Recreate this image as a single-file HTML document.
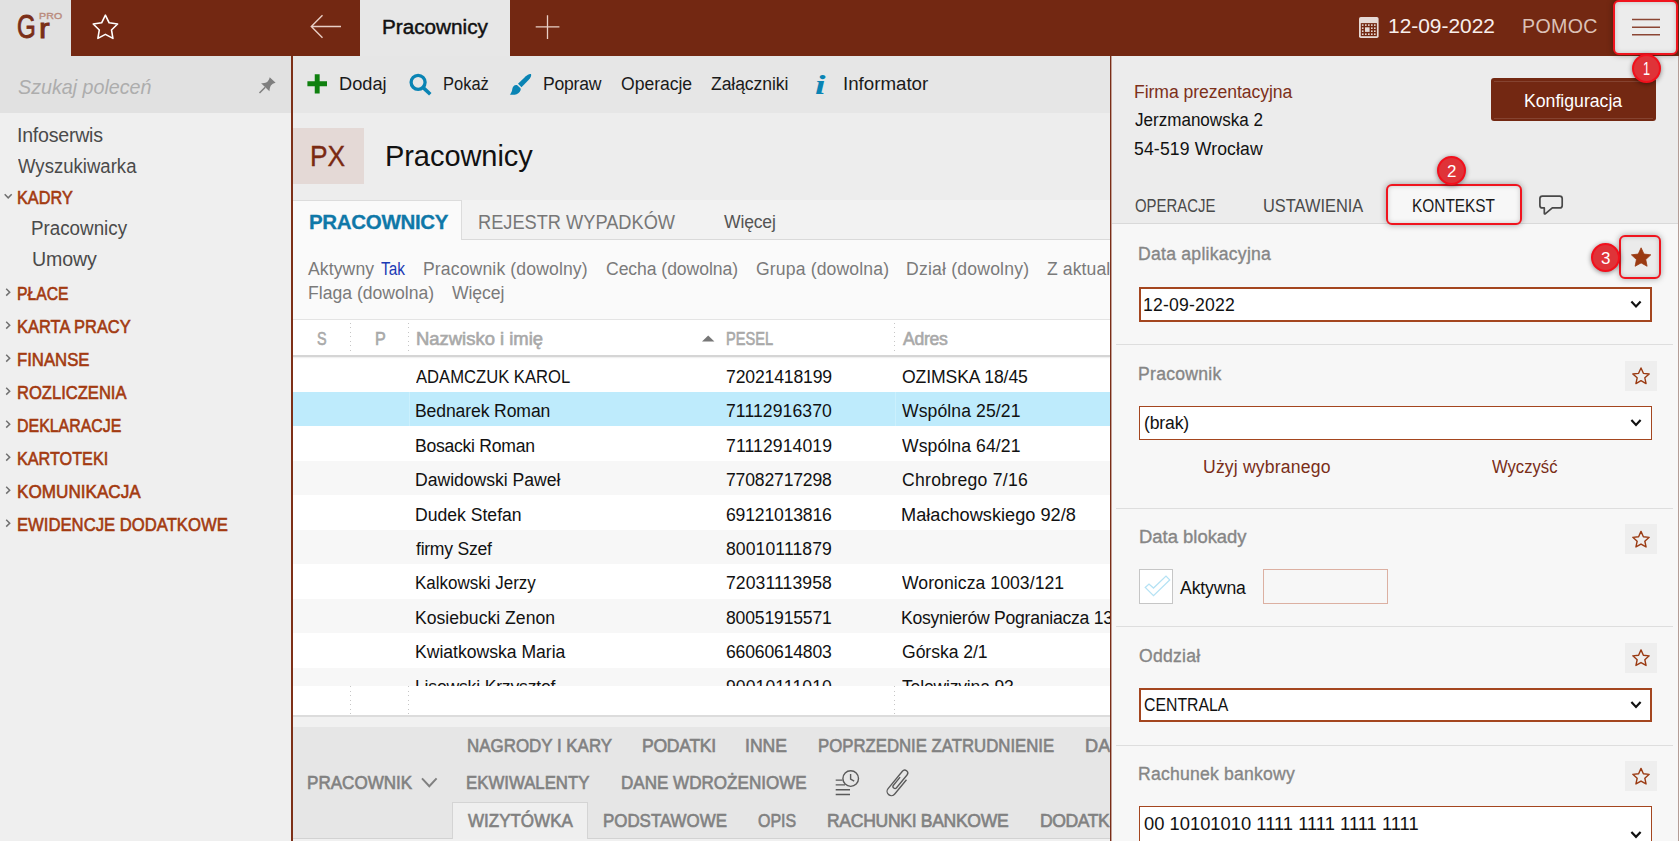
<!DOCTYPE html>
<html lang="pl"><head><meta charset="utf-8"><title>Pracownicy</title>
<style>
html,body{margin:0;padding:0}
body{width:1679px;height:841px;overflow:hidden;position:relative;background:#efefef;font-family:"Liberation Sans", sans-serif;}
.t{position:absolute;line-height:1;white-space:pre;}
.a{position:absolute;}

.inp{position:absolute;box-sizing:border-box;background:#fff;border:2px solid #a4461f;left:1139px;width:513px;height:35px;}
.sep{position:absolute;left:1116px;width:557px;height:1px;background:#dedede;}
.sbtn{position:absolute;left:1625px;width:32px;height:30px;background:#eeeeee;}
.badge{position:absolute;width:25px;height:25px;border-radius:50%;background:#df3338;border:2px solid #f2101c;box-shadow:0 1px 5px rgba(0,0,0,.45);}
.rbox{position:absolute;box-sizing:border-box;border:2.4px solid #f0141e;border-radius:6px;box-shadow:0 0 6px rgba(0,0,0,.35), inset 0 0 5px rgba(0,0,0,.18);}
.row{position:absolute;left:293px;width:817px;height:34.5px;}
.dot{position:absolute;width:1px;background:repeating-linear-gradient(to bottom,#c6c6c6 0,#c6c6c6 1px,transparent 1px,transparent 4.5px);}

</style></head><body>

<div class="a" style="left:0;top:0;width:1679px;height:56px;background:#732812"></div>
<div class="a" style="left:0;top:0;width:71px;height:56px;background:#e1e1e1"></div>
<div class="a" style="left:0;top:56px;width:291px;height:57px;background:#e1e1e1"></div>
<div class="a" style="left:360px;top:0;width:150px;height:56px;background:#e7e7e7"></div>
<div class="a" style="left:293px;top:56px;width:817px;height:57px;background:#e6e6e6"></div>
<div class="a" style="left:293px;top:113px;width:817px;height:87px;background:#ededed"></div>
<div class="a" style="left:293px;top:128px;width:71px;height:56px;background:#e4d9d6"></div>
<div class="a" style="left:293px;top:200px;width:817px;height:39px;background:#f2f2f2;border-bottom:1px solid #dadada"></div>
<div class="a" style="left:293px;top:200px;width:169px;height:40px;background:#fafafa;border-top:1px solid #dcdcdc;border-right:1px solid #dcdcdc;box-sizing:border-box"></div>
<div class="a" style="left:293px;top:240px;width:817px;height:79px;background:#fafafa"></div>
<div class="a" style="left:293px;top:319px;width:817px;height:37px;background:#fff;border-top:1px solid #e4e4e4;box-sizing:border-box"></div>
<div class="row" style="top:357.2px;background:#ffffff"></div><div class="row" style="top:391.7px;background:#beebfc"></div><div class="row" style="top:426.2px;background:#ffffff"></div><div class="row" style="top:460.7px;background:#f7f7f7"></div><div class="row" style="top:495.2px;background:#ffffff"></div><div class="row" style="top:529.7px;background:#f7f7f7"></div><div class="row" style="top:564.2px;background:#ffffff"></div><div class="row" style="top:598.7px;background:#f7f7f7"></div><div class="row" style="top:633.2px;background:#ffffff"></div><div class="row" style="top:667.7px;background:#f7f7f7"></div>
<div class="a" style="left:409px;top:392px;width:1px;height:34px;background:#cbf0fd"></div><div class="a" style="left:895px;top:392px;width:1px;height:34px;background:#cbf0fd"></div>
<div class="a" style="left:293px;top:355px;width:817px;height:1.7px;background:#d5d5d5;box-shadow:0 1px 1.5px rgba(0,0,0,.08)"></div>
<div class="dot" style="left:350px;top:323px;height:30px"></div>
<div class="dot" style="left:408px;top:323px;height:30px"></div>
<div class="dot" style="left:894px;top:323px;height:30px"></div>
<div class="a" style="left:293px;top:716px;width:817px;height:11px;background:#f1f1f1"></div>
<div class="a" style="left:293px;top:727px;width:817px;height:114px;background:#e6e6e6"></div>
<div class="a" style="left:293px;top:838px;width:817px;height:3px;background:#f0f0f0;border-top:1px solid #d2d2d2;box-sizing:border-box"></div>
<div class="a" style="left:452px;top:802px;width:136px;height:37px;background:#efefef;border:1px solid #d4d4d4;border-bottom:none;box-sizing:border-box"></div>
<div class="a" style="left:291px;top:56px;width:2px;height:785px;background:#7d3018"></div>

<div class="a" style="left:1112px;top:56px;width:567px;height:167px;background:#ececec"></div>
<div class="a" style="left:1112px;top:223px;width:567px;height:618px;background:#f7f7f7;border-top:1px solid #d9d9d9;box-sizing:border-box"></div>
<div class="a" style="left:1110px;top:56px;width:1px;height:785px;background:#7a2d17"></div><div class="a" style="left:1111px;top:56px;width:1px;height:785px;background:#c2a198"></div>
<div class="a" style="left:1491px;top:78px;width:165px;height:42.5px;background:#732812;border-radius:3px"></div>
<div class="a" style="left:1494px;top:80.6px;width:159px;height:36.4px;border-top:1px solid rgba(255,255,255,.13);border-bottom:1px solid rgba(255,255,255,.13)"></div>
<div class="a" style="left:1678px;top:56px;width:1px;height:785px;background:#b39d96"></div>
<div class="sep" style="top:344px"></div>
<div class="sep" style="top:508px"></div>
<div class="sep" style="top:626px"></div>
<div class="sep" style="top:745px"></div>
<div class="inp" style="top:287px"></div>
<div class="inp" style="top:406px;height:34px;border-width:1.2px"></div>
<div class="inp" style="top:688px;height:34px"></div>
<div class="inp" style="top:806px;height:60px;border-width:1.2px"></div>
<div class="sbtn" style="top:360.5px"></div>
<div class="sbtn" style="top:524px"></div>
<div class="sbtn" style="top:642.5px"></div>
<div class="sbtn" style="top:761px"></div>
<div class="a" style="left:1139px;top:569px;width:34px;height:35px;box-sizing:border-box;background:#fff;border:1.3px solid #c6c6c6"></div>
<div class="a" style="left:1263px;top:569px;width:125px;height:34.5px;box-sizing:border-box;background:#f7f7f7;border:1.5px solid #dcb0a2"></div>

<div class="rbox" style="left:1612.6px;top:0.4px;width:65.8px;height:55px;background:#ececec"></div>
<div class="rbox" style="left:1386px;top:184px;width:136px;height:41px;background:#f7f7f7"></div>
<div class="rbox" style="left:1619px;top:235px;width:42px;height:43.5px;background:#ebebeb"></div>
<div class="badge" style="left:1632px;top:54px"></div>
<div class="badge" style="left:1437px;top:156px"></div>
<div class="badge" style="left:1590.8px;top:243px"></div>

<div class="a" style="left:0;top:0;width:1679px;height:841px;overflow:hidden">
<span class="t" style="left:17px;top:9px;font-size:34px;-webkit-text-stroke:0.9px currentColor;color:#7a2e18;transform:scaleX(0.7114);transform-origin:0 0;">G</span>
<span class="t" style="left:39px;top:15px;font-size:27.5px;-webkit-text-stroke:0.9px currentColor;color:#7a2e18;transform:scaleX(1.1614);transform-origin:0 0;">r</span>
<span class="t" style="left:39px;top:12px;font-size:9.3px;-webkit-text-stroke:0.4px currentColor;color:#ba8a7c;letter-spacing:0.109px;transform:scaleX(1.1375);transform-origin:0 0;">PRO</span>
<span class="t" style="left:382px;top:17px;font-size:20px;-webkit-text-stroke:0.45px currentColor;color:#111;letter-spacing:0.000px;transform:scaleX(1.0357);transform-origin:0 0;">Pracownicy</span>
<span class="t" style="left:1388px;top:17px;font-size:19.6px;color:#f8efec;letter-spacing:0.000px;transform:scaleX(1.0669);transform-origin:0 0;">12-09-2022</span>
<span class="t" style="left:1522px;top:17px;font-size:19.6px;color:#dcc1b7;letter-spacing:0.362px;">POMOC</span>
<span class="t" style="left:18px;top:76px;font-size:21px;font-style:italic;color:#adadad;letter-spacing:0.000px;transform:scaleX(0.9374);transform-origin:0 0;">Szukaj poleceń</span>
<span class="t" style="left:17px;top:126px;font-size:19.6px;color:#4a4a4a;letter-spacing:-0.249px;">Infoserwis</span>
<span class="t" style="left:18px;top:157px;font-size:19.6px;color:#4a4a4a;letter-spacing:0.014px;transform:scaleX(0.9464);transform-origin:0 0;">Wyszukiwarka</span>
<span class="t" style="left:17px;top:189px;font-size:18px;-webkit-text-stroke:0.6px currentColor;color:#a33a10;letter-spacing:0.041px;transform:scaleX(0.9017);transform-origin:0 0;">KADRY</span>
<span class="t" style="left:31px;top:219px;font-size:19.6px;color:#4a4a4a;letter-spacing:0.000px;transform:scaleX(0.9586);transform-origin:0 0;">Pracownicy</span>
<span class="t" style="left:32px;top:250px;font-size:19.6px;color:#4a4a4a;letter-spacing:-0.145px;">Umowy</span>
<span class="t" style="left:17px;top:285px;font-size:18px;-webkit-text-stroke:0.6px currentColor;color:#a33a10;letter-spacing:0.000px;transform:scaleX(0.8711);transform-origin:0 0;">PŁACE</span>
<span class="t" style="left:17px;top:318px;font-size:18px;-webkit-text-stroke:0.6px currentColor;color:#a33a10;letter-spacing:0.000px;transform:scaleX(0.9145);transform-origin:0 0;">KARTA PRACY</span>
<span class="t" style="left:17px;top:351px;font-size:18px;-webkit-text-stroke:0.6px currentColor;color:#a33a10;letter-spacing:0.000px;transform:scaleX(0.9294);transform-origin:0 0;">FINANSE</span>
<span class="t" style="left:17px;top:384px;font-size:18px;-webkit-text-stroke:0.6px currentColor;color:#a33a10;letter-spacing:0.000px;transform:scaleX(0.9200);transform-origin:0 0;">ROZLICZENIA</span>
<span class="t" style="left:17px;top:417px;font-size:18px;-webkit-text-stroke:0.6px currentColor;color:#a33a10;letter-spacing:0.000px;transform:scaleX(0.8849);transform-origin:0 0;">DEKLARACJE</span>
<span class="t" style="left:17px;top:450px;font-size:18px;-webkit-text-stroke:0.6px currentColor;color:#a33a10;letter-spacing:0.000px;transform:scaleX(0.9000);transform-origin:0 0;">KARTOTEKI</span>
<span class="t" style="left:17px;top:483px;font-size:18px;-webkit-text-stroke:0.6px currentColor;color:#a33a10;letter-spacing:0.019px;transform:scaleX(0.9501);transform-origin:0 0;">KOMUNIKACJA</span>
<span class="t" style="left:17px;top:516px;font-size:18px;-webkit-text-stroke:0.6px currentColor;color:#a33a10;letter-spacing:0.000px;transform:scaleX(0.9258);transform-origin:0 0;">EWIDENCJE DODATKOWE</span>
<span class="t" style="left:339px;top:76px;font-size:17.6px;color:#1a1a1a;letter-spacing:0.000px;transform:scaleX(1.0352);transform-origin:0 0;">Dodaj</span>
<span class="t" style="left:443px;top:76px;font-size:17.6px;color:#1a1a1a;letter-spacing:-0.026px;transform:scaleX(0.9386);transform-origin:0 0;">Pokaż</span>
<span class="t" style="left:543px;top:76px;font-size:17.6px;color:#1a1a1a;letter-spacing:-0.258px;">Popraw</span>
<span class="t" style="left:621px;top:76px;font-size:17.6px;color:#1a1a1a;letter-spacing:-0.038px;">Operacje</span>
<span class="t" style="left:711px;top:76px;font-size:17.6px;color:#1a1a1a;letter-spacing:-0.095px;">Załączniki</span>
<span class="t" style="left:843px;top:76px;font-size:17.6px;color:#1a1a1a;letter-spacing:-0.014px;transform:scaleX(1.0650);transform-origin:0 0;">Informator</span>
<span class="t" style="left:815px;top:72px;font-size:27px;font-family:'Liberation Serif',serif;font-weight:700;font-style:italic;color:#0a84b4;transform:scaleX(1.4000);transform-origin:0 0;">i</span>
<span class="t" style="left:310px;top:141px;font-size:30px;-webkit-text-stroke:0.35px currentColor;color:#7a2a12;letter-spacing:0.000px;transform:scaleX(0.8799);transform-origin:0 0;">PX</span>
<span class="t" style="left:385px;top:142px;font-size:29px;color:#111;letter-spacing:-0.063px;">Pracownicy</span>
<span class="t" style="left:309px;top:212px;font-size:20.5px;font-weight:700;-webkit-text-stroke:0.3px currentColor;color:#0f78a8;letter-spacing:-0.327px;">PRACOWNICY</span>
<span class="t" style="left:478px;top:212px;font-size:20.5px;color:#777;letter-spacing:0.000px;transform:scaleX(0.8886);transform-origin:0 0;">REJESTR WYPADKÓW</span>
<span class="t" style="left:724px;top:214px;font-size:17.6px;color:#555;letter-spacing:-0.184px;">Więcej</span>
<span class="t" style="left:308px;top:261px;font-size:17.6px;color:#7a7a7a;letter-spacing:0.094px;">Aktywny</span>
<span class="t" style="left:381px;top:261px;font-size:17.6px;color:#1a3ab5;letter-spacing:0.000px;transform:scaleX(0.8751);transform-origin:0 0;">Tak</span>
<span class="t" style="left:423px;top:261px;font-size:17.6px;color:#7a7a7a;letter-spacing:0.129px;">Pracownik (dowolny)</span>
<span class="t" style="left:606px;top:261px;font-size:17.6px;color:#7a7a7a;letter-spacing:-0.065px;">Cecha (dowolna)</span>
<span class="t" style="left:756px;top:261px;font-size:17.6px;color:#7a7a7a;letter-spacing:0.142px;">Grupa (dowolna)</span>
<span class="t" style="left:906px;top:261px;font-size:17.6px;color:#7a7a7a;letter-spacing:0.201px;">Dział (dowolny)</span>
<span class="t" style="left:1047px;top:261px;font-size:17.6px;color:#7a7a7a;letter-spacing:0.097px;width:63.0px;overflow:hidden;">Z aktualnością</span>
<span class="t" style="left:308px;top:285px;font-size:17.6px;color:#7a7a7a;letter-spacing:0.000px;">Flaga (dowolna)</span>
<span class="t" style="left:452px;top:285px;font-size:17.6px;color:#7a7a7a;letter-spacing:-0.073px;">Więcej</span>
<span class="t" style="left:317px;top:331px;font-size:17.6px;-webkit-text-stroke:0.6px currentColor;color:#a9a9a9;transform:scaleX(0.8183);transform-origin:0 0;">S</span>
<span class="t" style="left:375px;top:331px;font-size:17.6px;-webkit-text-stroke:0.6px currentColor;color:#a9a9a9;transform:scaleX(0.9160);transform-origin:0 0;">P</span>
<span class="t" style="left:416px;top:331px;font-size:17.6px;-webkit-text-stroke:0.6px currentColor;color:#a9a9a9;letter-spacing:0.000px;transform:scaleX(1.0481);transform-origin:0 0;">Nazwisko i imię</span>
<span class="t" style="left:726px;top:331px;font-size:17.6px;-webkit-text-stroke:0.6px currentColor;color:#a9a9a9;letter-spacing:0.000px;transform:scaleX(0.8320);transform-origin:0 0;">PESEL</span>
<span class="t" style="left:903px;top:331px;font-size:17.6px;-webkit-text-stroke:0.6px currentColor;color:#a9a9a9;letter-spacing:-0.282px;">Adres</span>
<span class="t" style="left:416px;top:369px;font-size:17.6px;color:#111;letter-spacing:0.000px;transform:scaleX(0.9442);transform-origin:0 0;">ADAMCZUK KAROL</span>
<span class="t" style="left:726px;top:369px;font-size:17.6px;color:#111;letter-spacing:-0.150px;">72021418199</span>
<span class="t" style="left:902px;top:369px;font-size:17.6px;color:#111;letter-spacing:-0.105px;width:208.0px;overflow:hidden;">OZIMSKA 18/45</span>
<span class="t" style="left:415px;top:403px;font-size:17.6px;color:#111;letter-spacing:-0.122px;">Bednarek Roman</span>
<span class="t" style="left:726px;top:403px;font-size:17.6px;color:#111;letter-spacing:0.081px;">71112916370</span>
<span class="t" style="left:902px;top:403px;font-size:17.6px;color:#111;letter-spacing:0.094px;width:208.0px;overflow:hidden;">Wspólna 25/21</span>
<span class="t" style="left:415px;top:438px;font-size:17.6px;color:#111;letter-spacing:-0.267px;">Bosacki Roman</span>
<span class="t" style="left:726px;top:438px;font-size:17.6px;color:#111;letter-spacing:0.093px;">71112914019</span>
<span class="t" style="left:902px;top:438px;font-size:17.6px;color:#111;letter-spacing:0.094px;width:208.0px;overflow:hidden;">Wspólna 64/21</span>
<span class="t" style="left:415px;top:472px;font-size:17.6px;color:#111;letter-spacing:-0.020px;">Dawidowski Paweł</span>
<span class="t" style="left:726px;top:472px;font-size:17.6px;color:#111;letter-spacing:-0.177px;">77082717298</span>
<span class="t" style="left:902px;top:472px;font-size:17.6px;color:#111;letter-spacing:0.275px;width:208.0px;overflow:hidden;">Chrobrego 7/16</span>
<span class="t" style="left:415px;top:507px;font-size:17.6px;color:#111;letter-spacing:0.000px;">Dudek Stefan</span>
<span class="t" style="left:726px;top:507px;font-size:17.6px;color:#111;letter-spacing:-0.177px;">69121013816</span>
<span class="t" style="left:901px;top:507px;font-size:17.6px;color:#111;letter-spacing:0.000px;transform:scaleX(1.0331);transform-origin:0 0;width:202.3px;overflow:hidden;">Małachowskiego 92/8</span>
<span class="t" style="left:416px;top:541px;font-size:17.6px;color:#111;letter-spacing:-0.261px;">firmy Szef</span>
<span class="t" style="left:726px;top:541px;font-size:17.6px;color:#111;letter-spacing:0.086px;">80010111879</span>
<span class="t" style="left:415px;top:575px;font-size:17.6px;color:#111;letter-spacing:0.000px;transform:scaleX(0.9655);transform-origin:0 0;">Kalkowski Jerzy</span>
<span class="t" style="left:726px;top:575px;font-size:17.6px;color:#111;letter-spacing:0.080px;">72031113958</span>
<span class="t" style="left:902px;top:575px;font-size:17.6px;color:#111;letter-spacing:0.064px;width:208.0px;overflow:hidden;">Woronicza 1003/121</span>
<span class="t" style="left:415px;top:610px;font-size:17.6px;color:#111;letter-spacing:0.012px;">Kosiebucki Zenon</span>
<span class="t" style="left:726px;top:610px;font-size:17.6px;color:#111;letter-spacing:-0.176px;">80051915571</span>
<span class="t" style="left:901px;top:610px;font-size:17.6px;color:#111;letter-spacing:-0.252px;width:209.0px;overflow:hidden;">Kosynierów Pograniacza 13</span>
<span class="t" style="left:415px;top:644px;font-size:17.6px;color:#111;letter-spacing:-0.016px;">Kwiatkowska Maria</span>
<span class="t" style="left:726px;top:644px;font-size:17.6px;color:#111;letter-spacing:-0.177px;">66060614803</span>
<span class="t" style="left:902px;top:644px;font-size:17.6px;color:#111;letter-spacing:-0.050px;width:208.0px;overflow:hidden;">Górska 2/1</span>
<span class="t" style="left:415px;top:679px;font-size:17.6px;color:#111;letter-spacing:-0.193px;">Lisowski Krzysztof</span>
<span class="t" style="left:726px;top:679px;font-size:17.6px;color:#111;letter-spacing:0.078px;">90010111010</span>
<span class="t" style="left:902px;top:679px;font-size:17.6px;color:#111;letter-spacing:-0.203px;width:208.0px;overflow:hidden;">Telewizyjna 93</span>
<span class="t" style="left:467px;top:738px;font-size:17.6px;-webkit-text-stroke:0.6px currentColor;color:#818181;letter-spacing:0.000px;transform:scaleX(0.9616);transform-origin:0 0;">NAGRODY I KARY</span>
<span class="t" style="left:642px;top:738px;font-size:17.6px;-webkit-text-stroke:0.6px currentColor;color:#818181;letter-spacing:-0.291px;">PODATKI</span>
<span class="t" style="left:745px;top:738px;font-size:17.6px;-webkit-text-stroke:0.6px currentColor;color:#818181;letter-spacing:0.000px;">INNE</span>
<span class="t" style="left:818px;top:738px;font-size:17.6px;-webkit-text-stroke:0.6px currentColor;color:#818181;letter-spacing:0.000px;transform:scaleX(0.9524);transform-origin:0 0;">POPRZEDNIE ZATRUDNIENIE</span>
<span class="t" style="left:1085px;top:738px;font-size:17.6px;-webkit-text-stroke:0.6px currentColor;color:#818181;letter-spacing:0.000px;transform:scaleX(1.0332);transform-origin:0 0;width:24.2px;overflow:hidden;">DANE</span>
<span class="t" style="left:307px;top:775px;font-size:17.6px;-webkit-text-stroke:0.6px currentColor;color:#818181;letter-spacing:0.000px;transform:scaleX(0.9696);transform-origin:0 0;">PRACOWNIK</span>
<span class="t" style="left:466px;top:775px;font-size:17.6px;-webkit-text-stroke:0.6px currentColor;color:#818181;letter-spacing:0.000px;transform:scaleX(0.9543);transform-origin:0 0;">EKWIWALENTY</span>
<span class="t" style="left:621px;top:775px;font-size:17.6px;-webkit-text-stroke:0.6px currentColor;color:#818181;letter-spacing:0.000px;transform:scaleX(0.9694);transform-origin:0 0;">DANE WDROŻENIOWE</span>
<span class="t" style="left:468px;top:813px;font-size:17.6px;-webkit-text-stroke:0.6px currentColor;color:#818181;letter-spacing:-0.020px;transform:scaleX(0.9678);transform-origin:0 0;">WIZYTÓWKA</span>
<span class="t" style="left:603px;top:813px;font-size:17.6px;-webkit-text-stroke:0.6px currentColor;color:#818181;letter-spacing:0.000px;transform:scaleX(0.9605);transform-origin:0 0;">PODSTAWOWE</span>
<span class="t" style="left:758px;top:813px;font-size:17.6px;-webkit-text-stroke:0.6px currentColor;color:#818181;letter-spacing:0.000px;transform:scaleX(0.9077);transform-origin:0 0;">OPIS</span>
<span class="t" style="left:827px;top:813px;font-size:17.6px;-webkit-text-stroke:0.6px currentColor;color:#818181;letter-spacing:-0.334px;">RACHUNKI BANKOWE</span>
<span class="t" style="left:1040px;top:813px;font-size:17.6px;-webkit-text-stroke:0.6px currentColor;color:#818181;letter-spacing:-0.430px;width:70.0px;overflow:hidden;">DODATKOWE</span>
<span class="t" style="left:1134px;top:84px;font-size:17.6px;color:#7d301a;letter-spacing:-0.061px;">Firma prezentacyjna</span>
<span class="t" style="left:1135px;top:112px;font-size:17.6px;color:#111;letter-spacing:0.000px;transform:scaleX(0.9689);transform-origin:0 0;">Jerzmanowska 2</span>
<span class="t" style="left:1134px;top:141px;font-size:17.6px;color:#111;letter-spacing:0.149px;">54-519 Wrocław</span>
<span class="t" style="left:1524px;top:92px;font-size:18.5px;color:#fff;letter-spacing:-0.020px;transform:scaleX(0.9564);transform-origin:0 0;">Konfiguracja</span>
<span class="t" style="left:1135px;top:198px;font-size:17.6px;color:#4a4a4a;letter-spacing:0.000px;transform:scaleX(0.8484);transform-origin:0 0;">OPERACJE</span>
<span class="t" style="left:1263px;top:198px;font-size:17.6px;color:#4a4a4a;letter-spacing:0.000px;transform:scaleX(0.9325);transform-origin:0 0;">USTAWIENIA</span>
<span class="t" style="left:1412px;top:198px;font-size:17.6px;color:#1a1a1a;letter-spacing:0.000px;transform:scaleX(0.8756);transform-origin:0 0;">KONTEKST</span>
<span class="t" style="left:1138px;top:246px;font-size:17.6px;-webkit-text-stroke:0.35px currentColor;color:#868686;letter-spacing:0.252px;">Data aplikacyjna</span>
<span class="t" style="left:1143px;top:297px;font-size:17.6px;color:#111;letter-spacing:0.189px;">12-09-2022</span>
<span class="t" style="left:1138px;top:366px;font-size:17.6px;-webkit-text-stroke:0.35px currentColor;color:#868686;letter-spacing:0.269px;">Pracownik</span>
<span class="t" style="left:1144px;top:415px;font-size:17.6px;color:#111;letter-spacing:-0.142px;">(brak)</span>
<span class="t" style="left:1203px;top:459px;font-size:17.6px;color:#7a2e18;letter-spacing:0.174px;">Użyj wybranego</span>
<span class="t" style="left:1492px;top:459px;font-size:17.6px;color:#7a2e18;letter-spacing:0.000px;transform:scaleX(0.9453);transform-origin:0 0;">Wyczyść</span>
<span class="t" style="left:1139px;top:529px;font-size:17.6px;-webkit-text-stroke:0.35px currentColor;color:#868686;letter-spacing:0.000px;transform:scaleX(1.0475);transform-origin:0 0;">Data blokady</span>
<span class="t" style="left:1180px;top:580px;font-size:17.6px;color:#111;letter-spacing:-0.108px;">Aktywna</span>
<span class="t" style="left:1139px;top:648px;font-size:17.6px;-webkit-text-stroke:0.35px currentColor;color:#868686;letter-spacing:0.246px;">Oddział</span>
<span class="t" style="left:1144px;top:697px;font-size:17.6px;color:#111;letter-spacing:0.000px;transform:scaleX(0.8991);transform-origin:0 0;">CENTRALA</span>
<span class="t" style="left:1138px;top:766px;font-size:17.6px;-webkit-text-stroke:0.35px currentColor;color:#868686;letter-spacing:0.213px;">Rachunek bankowy</span>
<span class="t" style="left:1144px;top:816px;font-size:17.6px;color:#111;letter-spacing:0.000px;transform:scaleX(1.0436);transform-origin:0 0;">00 10101010 1111 1111 1111 1111</span>
<span class="t" style="left:1143px;top:840px;font-size:17.6px;color:#111;letter-spacing:-0.228px;">Bank Zachodni WBK SA</span>
<span class="t" style="left:1643px;top:61px;font-size:17.5px;color:#fff;transform:scaleX(0.7225);transform-origin:0 0;">1</span>
<span class="t" style="left:1447px;top:163px;font-size:17px;color:#fff;">2</span>
<span class="t" style="left:1601px;top:250px;font-size:17px;color:#fff;">3</span>
</div>

<div class="a" style="left:293px;top:686px;width:817px;height:29.5px;background:#fff"></div>
<div class="dot" style="left:350px;top:686px;height:29px"></div>
<div class="dot" style="left:408px;top:686px;height:29px"></div>
<div class="dot" style="left:894px;top:686px;height:29px"></div>
<div class="a" style="left:293px;top:715px;width:817px;height:2px;background:#dcdcdc"></div>
<svg class="a" style="left:0;top:0" width="1679" height="841" viewBox="0 0 1679 841">
<polygon points="105.40,15.20 109.16,22.82 117.57,24.04 111.49,29.98 112.92,38.36 105.40,34.40 97.88,38.36 99.31,29.98 93.23,24.04 101.64,22.82" fill="none" stroke="#fff" stroke-width="1.6" stroke-linejoin="round"/>
<path d="M341 26.5 H311.5 M322.5 15.3 L311.3 26.5 L322.5 37.7" fill="none" stroke="#e9cfc6" stroke-width="1.4"/>
<path d="M535.7 26.8 H559.4 M547.5 15.2 V39" fill="none" stroke="#e9cfc6" stroke-width="1.3"/>
<path d="M1632 19.6 H1660 M1632 27.2 H1660 M1632 34.8 H1660" fill="none" stroke="#8b4634" stroke-width="1.5"/>
<polygon points="1641.10,247.80 1643.98,254.04 1650.80,254.85 1645.76,259.51 1647.10,266.25 1641.10,262.90 1635.10,266.25 1636.44,259.51 1631.40,254.85 1638.22,254.04" fill="#9a3a12" stroke="#9a3a12" stroke-width="0.8" stroke-linejoin="round"/>
<polygon points="1641.00,368.00 1643.38,373.33 1649.18,373.94 1644.84,377.85 1646.05,383.56 1641.00,380.64 1635.95,383.56 1637.16,377.85 1632.82,373.94 1638.62,373.33" fill="none" stroke="#9a3a12" stroke-width="1.4" stroke-linejoin="round"/>
<polygon points="1641.00,531.40 1643.38,536.73 1649.18,537.34 1644.84,541.25 1646.05,546.96 1641.00,544.04 1635.95,546.96 1637.16,541.25 1632.82,537.34 1638.62,536.73" fill="none" stroke="#9a3a12" stroke-width="1.4" stroke-linejoin="round"/>
<polygon points="1641.00,649.90 1643.38,655.23 1649.18,655.84 1644.84,659.75 1646.05,665.46 1641.00,662.54 1635.95,665.46 1637.16,659.75 1632.82,655.84 1638.62,655.23" fill="none" stroke="#9a3a12" stroke-width="1.4" stroke-linejoin="round"/>
<polygon points="1641.00,768.40 1643.38,773.73 1649.18,774.34 1644.84,778.25 1646.05,783.96 1641.00,781.04 1635.95,783.96 1637.16,778.25 1632.82,774.34 1638.62,773.73" fill="none" stroke="#9a3a12" stroke-width="1.4" stroke-linejoin="round"/>
<path d="M1631.4 301.59999999999997 L1636 306.4 L1640.6 301.59999999999997" fill="none" stroke="#111" stroke-width="2.2" stroke-linecap="butt" stroke-linejoin="miter"/>
<path d="M1631.4 420.09999999999997 L1636 424.9 L1640.6 420.09999999999997" fill="none" stroke="#111" stroke-width="2.2" stroke-linecap="butt" stroke-linejoin="miter"/>
<path d="M1631.4 702.1 L1636 706.9000000000001 L1640.6 702.1" fill="none" stroke="#111" stroke-width="2.2" stroke-linecap="butt" stroke-linejoin="miter"/>
<path d="M1631.4 832.0 L1636 836.8000000000001 L1640.6 832.0" fill="none" stroke="#111" stroke-width="2.2" stroke-linecap="butt" stroke-linejoin="miter"/>
<!-- green plus -->
<path d="M317.2 74.2 V93.4 M307.4 83.8 H327" fill="none" stroke="#0f800f" stroke-width="4.9"/>
<!-- search -->
<circle cx="418.1" cy="82.3" r="7.0" fill="none" stroke="#0a84b4" stroke-width="3.3"/>
<path d="M423.2 87.6 L430.3 94.2" stroke="#0a84b4" stroke-width="3.6" stroke-linecap="butt"/>
<!-- brush -->
<path d="M531 74 C529.2 73.5 527.4 74.8 525.8 76.3 L518 83.7 L521.5 87.2 L528.8 79.8 C530.6 77.9 531.6 75.6 531 74 Z" fill="#0a84b4"/>
<path d="M517 85 C514.4 84.5 512.6 86.4 512.3 89 C512 91.4 511.3 93 509.8 94.6 C513.6 95.3 517.6 94.7 519.6 92 C520.9 90.3 521 88.7 520.3 87.9 Z" fill="#0a84b4"/>
<!-- pin -->
<path d="M269.7 77.2 L275.6 82.8 C273.5 83.3 271.8 84.3 270.9 85.6 C270 87.2 269.6 89.3 269.4 91.3 L261.1 83.3 C263 83.2 265.2 83 266.7 82.3 C268 81.5 269.2 79.5 269.7 77.2 Z" fill="#7f7f7f"/>
<path d="M265.2 87.3 L259.5 93" stroke="#7f7f7f" stroke-width="1.5"/>
<!-- calendar -->
<rect x="1359" y="17" width="19.6" height="21" rx="1.8" fill="#e6d9d5"/>
<rect x="1360.8" y="23.1" width="16.1" height="13.1" fill="#732812"/>
<rect x="1361.9" y="24.3" width="1.6" height="1.6" fill="#e6d9d5"/><rect x="1365.0" y="24.3" width="1.6" height="1.6" fill="#e6d9d5"/><rect x="1368.0" y="24.3" width="1.6" height="1.6" fill="#e6d9d5"/><rect x="1371.0" y="24.3" width="1.6" height="1.6" fill="#e6d9d5"/><rect x="1374.0" y="24.3" width="1.6" height="1.6" fill="#e6d9d5"/><rect x="1361.9" y="27.4" width="1.6" height="1.6" fill="#e6d9d5"/><rect x="1371.0" y="27.4" width="1.6" height="1.6" fill="#e6d9d5"/><rect x="1374.0" y="27.4" width="1.6" height="1.6" fill="#e6d9d5"/><rect x="1361.9" y="30.4" width="1.6" height="1.6" fill="#e6d9d5"/><rect x="1371.0" y="30.4" width="1.6" height="1.6" fill="#e6d9d5"/><rect x="1374.0" y="30.4" width="1.6" height="1.6" fill="#e6d9d5"/><rect x="1361.9" y="33.4" width="1.6" height="1.6" fill="#e6d9d5"/><rect x="1365.0" y="33.4" width="1.6" height="1.6" fill="#e6d9d5"/><rect x="1368.0" y="33.4" width="1.6" height="1.6" fill="#e6d9d5"/><rect x="1371.0" y="33.4" width="1.6" height="1.6" fill="#e6d9d5"/><rect x="1374.0" y="33.4" width="1.6" height="1.6" fill="#e6d9d5"/>
<rect x="1365" y="27.3" width="4.6" height="4.6" fill="#e6d9d5"/>
<!-- bubble -->
<path d="M1542.4 196.1 H1559.7 A2.5 2.5 0 0 1 1562.2 198.6 V205.4 A2.5 2.5 0 0 1 1559.7 207.9 H1552.3 L1545.5 213.6 C1544.8 214.2 1544.3 213.9 1544.3 213.2 V207.9 H1542.4 A2.5 2.5 0 0 1 1539.9 205.4 V198.6 A2.5 2.5 0 0 1 1542.4 196.1 Z" fill="none" stroke="#484848" stroke-width="1.7" stroke-linejoin="round"/>
<!-- clock list -->
<g fill="none" stroke="#5a5a5a" stroke-width="1.4">
<circle cx="850.7" cy="778.6" r="7.8"/>
<path d="M850.6 774 V779.1 L854.2 781.1"/>
<path d="M835.7 780.1 H842.6 M835.7 784.9 H845 M835.7 789.8 H850 M835.7 794.5 H850"/>
</g>
<!-- paperclip -->
<g transform="translate(891.4 791.3) rotate(-50.5)" fill="none" stroke="#5a5a5a" stroke-width="1.35">
<path d="M18.5 4.3 H0 A4.3 4.3 0 0 1 0 -4.3 H22.5 A3 3 0 0 1 22.5 1.7 H6 A2 2 0 0 1 6 -2.3 H16.5"/>
</g>
<!-- check -->
<polygon points="1145.2,587.4 1149,584.1 1153.5,588 1166,576.1 1169.7,579.9 1153.5,595.7" fill="none" stroke="#b5e2f4" stroke-width="1.3"/>
<!-- pracownik chevron -->
<path d="M422 778.4 L429.3 786.2 L436.6 778.4" fill="none" stroke="#818181" stroke-width="2"/>
<!-- sort arrow -->
<path d="M702 341.5 L708.2 335.4 L714.4 341.5 Z" fill="#777"/>
<!-- sidebar chevrons -->
<path d="M4.7 194.2 L8.2 197.8 L11.7 194.2" fill="none" stroke="#707070" stroke-width="1.5"/>
<path d="M6.2 288.8 L9.7 292.2 L6.2 295.6" fill="none" stroke="#707070" stroke-width="1.5"/>
<path d="M6.2 321.8 L9.7 325.2 L6.2 328.6" fill="none" stroke="#707070" stroke-width="1.5"/>
<path d="M6.2 354.8 L9.7 358.2 L6.2 361.6" fill="none" stroke="#707070" stroke-width="1.5"/>
<path d="M6.2 387.8 L9.7 391.2 L6.2 394.6" fill="none" stroke="#707070" stroke-width="1.5"/>
<path d="M6.2 420.8 L9.7 424.2 L6.2 427.6" fill="none" stroke="#707070" stroke-width="1.5"/>
<path d="M6.2 453.8 L9.7 457.2 L6.2 460.6" fill="none" stroke="#707070" stroke-width="1.5"/>
<path d="M6.2 486.8 L9.7 490.2 L6.2 493.6" fill="none" stroke="#707070" stroke-width="1.5"/>
<path d="M6.2 519.8 L9.7 523.2 L6.2 526.6" fill="none" stroke="#707070" stroke-width="1.5"/>
</svg>

</body></html>
